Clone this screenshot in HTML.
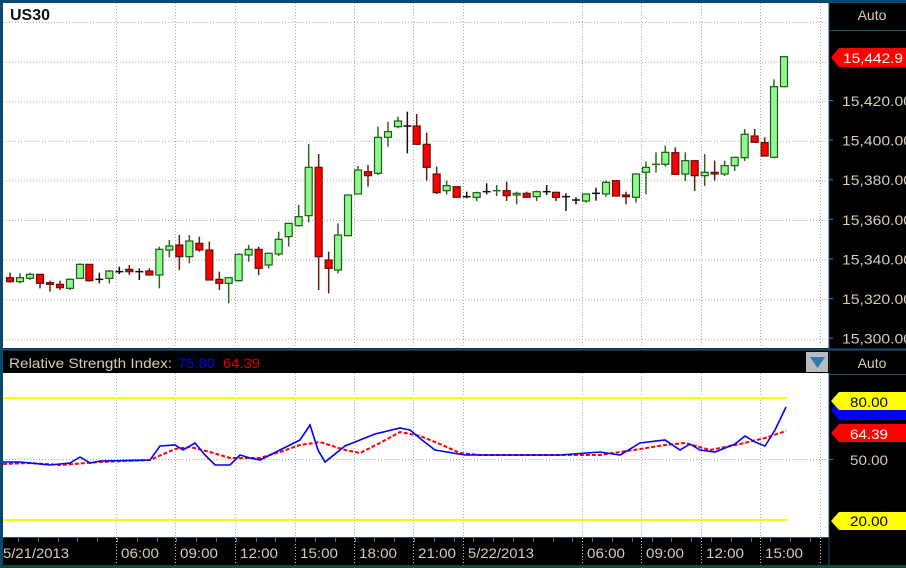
<!DOCTYPE html>
<html><head><meta charset="utf-8"><style>
html,body{margin:0;padding:0;background:#000;}
body{width:906px;height:568px;overflow:hidden;position:relative;font-family:"Liberation Sans",Tahoma,sans-serif;}
svg{position:absolute;left:0;top:0;}
</style></head><body>
<svg id="s" width="906" height="568" xmlns="http://www.w3.org/2000/svg" font-family="Liberation Sans, sans-serif">
<rect x="0" y="0" width="906" height="568" fill="#000"/>
<rect x="0" y="0" width="906" height="3" fill="#0b4a6e"/>
<rect x="0" y="0" width="3" height="568" fill="#0b4a6e"/>
<rect x="0" y="565" width="906" height="3" fill="#0f4a3a"/>
<rect x="3" y="3" width="826" height="345" fill="#fff"/>
<rect x="3" y="373" width="826" height="164" fill="#fff"/>
<line x1="829" y1="3" x2="829" y2="565" stroke="#1b4f70" stroke-width="1"/>
<line x1="3" y1="349.5" x2="906" y2="349.5" stroke="#1b4f70" stroke-width="2"/>
<line x1="3" y1="537.5" x2="829" y2="537.5" stroke="#1b4f70" stroke-width="1"/>
<g id="grid" stroke="#a8a8a8" stroke-width="1" stroke-dasharray="1,2"></g>
<g id="c"></g>
<line x1="3" y1="398" x2="787" y2="398" stroke="#ffff00" stroke-width="2"/>
<line x1="3" y1="520" x2="787" y2="520" stroke="#ffff00" stroke-width="2"/>
<polyline id="red" fill="none" stroke="#ff0000" stroke-width="2" stroke-dasharray="4,2"/>
<polyline id="blue" fill="none" stroke="#0000ff" stroke-width="1.6"/>
<text x="10" y="20" font-size="16" font-weight="bold" fill="#111" textLength="40" lengthAdjust="spacingAndGlyphs">US30</text>
<rect x="3" y="351" width="826" height="22" fill="#000"/>
<text x="9" y="368" font-size="14" fill="#d8ccb8" textLength="163" lengthAdjust="spacingAndGlyphs">Relative Strength Index:</text>
<text x="178" y="368" font-size="14" fill="#0000ff" textLength="37" lengthAdjust="spacingAndGlyphs">75.80</text>
<text x="223" y="368" font-size="14" fill="#e00000" textLength="37" lengthAdjust="spacingAndGlyphs">64.39</text>
<rect x="806" y="352" width="22" height="20" fill="#b8bcc0"/>
<polygon points="810,357 825,357 817.5,368" fill="#2e78b0"/>
<line x1="829" y1="30.5" x2="906" y2="30.5" stroke="#1b4f70"/>
<text x="872" y="20" font-size="14" fill="#d8ccb8" text-anchor="middle">Auto</text>
<text x="872" y="368" font-size="14" fill="#d8ccb8" text-anchor="middle">Auto</text>
<line x1="829" y1="374.5" x2="906" y2="374.5" stroke="#1b4f70"/>
<g id="ax" font-size="14" fill="#d8ccb8"></g>
<polygon points="831,57.5 839,48 906,48 906,67 839,67" fill="#ff0000"/>
<text x="843" y="63" font-size="14" fill="#fff" textLength="60" lengthAdjust="spacingAndGlyphs">15,442.9</text>
<polygon points="831,410 839,401 906,401 906,420 839,420" fill="#0000ff"/>
<polygon points="831,401 839,392 906,392 906,410 839,410" fill="#ffff00"/>
<text x="850" y="407" font-size="14" fill="#000" textLength="38" lengthAdjust="spacingAndGlyphs">80.00</text>
<polygon points="831,433 839,424 906,424 906,442 839,442" fill="#ff0000"/>
<text x="850" y="439" font-size="14" fill="#fff" textLength="38" lengthAdjust="spacingAndGlyphs">64.39</text>
<polygon points="831,521 839,512 906,512 906,530 839,530" fill="#ffff00"/>
<text x="850" y="526" font-size="14" fill="#000" textLength="38" lengthAdjust="spacingAndGlyphs">20.00</text>
<g id="tx" font-size="14" fill="#d8ccb8"></g>
</svg>
<script>
var NS="http://www.w3.org/2000/svg";
function el(p,t,a,txt){var e=document.createElementNS(NS,t);for(var k in a)e.setAttribute(k,a[k]);if(txt)e.textContent=txt;document.getElementById(p).appendChild(e);}
var vx=[116,175,235,295,354,413,463,582,641,701,760,820];
vx.forEach(function(x){el('grid','line',{x1:x+.5,y1:3,x2:x+.5,y2:348});el('grid','line',{x1:x+.5,y1:373,x2:x+.5,y2:537});});
for(var k=0;k<9;k++){var y=22+39.6*k;if(y<348)el('grid','line',{x1:3,y1:y+.5,x2:829,y2:y+.5});}
el('grid','line',{x1:3,y1:459.5,x2:829,y2:459.5});
var labs=["15,420.00","15,400.00","15,380.00","15,360.00","15,340.00","15,320.00","15,300.00"];
labs.forEach(function(l,i){var y=100+39.6*i;el('ax','text',{x:842,y:y+6,textLength:70,lengthAdjust:'spacingAndGlyphs'},l);el('ax','rect',{x:829,y:y,width:4,height:1,fill:'#3a7ab0'});});
el('ax','text',{x:850,y:465,textLength:38,lengthAdjust:'spacingAndGlyphs'},"50.00");el('ax','rect',{x:829,y:459,width:4,height:1,fill:'#3a7ab0'});
var tl=[[3,"5/21/2013",66],[121,"06:00",0],[180,"09:00",0],[240,"12:00",0],[300,"15:00",0],[359,"18:00",0],[418,"21:00",0],[468,"5/22/2013",66],[587,"06:00",0],[646,"09:00",0],[706,"12:00",0],[765,"15:00",0]];
tl.forEach(function(t){el('tx','text',{x:t[0],y:558,textLength:t[2]||38,lengthAdjust:'spacingAndGlyphs'},t[1]);});
vx.forEach(function(x){el('tx','line',{x1:x+.5,y1:538,x2:x+.5,y2:565,stroke:'#ccc','stroke-dasharray':'1,2'});});
for(var x=18;x<829;x+=19.8){el('tx','rect',{x:Math.round(x),y:538,width:1,height:4,fill:'#3a7ab0'});}
var d1=[[30,428,443,455,458,'r'],[60,430,443,455,460,'g'],[90,428,433,445,450,'g'],[120,433,433,460,475,'r'],[150,452,458,463,485,'r'],[180,452,463,473,480,'r'],[210,445,448,475,480,'g'],[240,400,403,445,445,'g'],[268,403,403,452,455,'r'],[298,428,448,448,460,'k'],[328,420,423,445,460,'g'],[358,410,425,425,432,'k'],[388,405,418,425,435,'r'],[418,415,425,425,450,'k'],[448,415,423,435,435,'r'],[478,350,358,435,475,'g'],[508,330,348,360,382,'g'],[538,315,345,380,420,'r'],[568,315,333,380,400,'g'],[598,320,340,360,365,'r'],[628,335,360,450,450,'r'],[658,425,448,460,480,'r'],[686,442,443,460,520,'g'],[716,370,373,452,455,'g'],[746,345,358,375,395,'g'],[776,350,358,415,435,'r'],[806,368,370,405,415,'g'],[836,305,328,372,378,'g'],[866,280,280,320,350,'g'],[896,225,260,287,290,'g'],[926,42,112,257,277,'g'],[956,72,112,380,480,'r'],[986,365,390,415,490,'r'],[1014,280,315,420,430,'g'],[1044,193,195,317,317,'g'],[1074,108,120,192,192,'g'],[1104,105,125,137,170,'r'],[1134,-10,22,130,135,'g'],[1164,-25,5,22,50,'g'],[1194,-40,-27,-10,-5,'g']];
var d2=[[22,215,258,258,340,'k'],[50,222,258,313,313,'r'],[80,278,313,382,422,'r'],[110,380,402,458,462,'r'],[140,422,437,452,463,'g'],[170,440,440,472,472,'r'],[200,455,470,470,475,'k'],[230,455,458,472,483,'g'],[260,430,455,455,463,'k'],[290,435,452,455,468,'g'],[320,425,452,467,483,'r'],[350,455,460,465,493,'g'],[380,455,460,472,472,'r'],[410,452,455,470,483,'g'],[440,435,455,455,465,'k'],[468,455,457,472,483,'r'],[498,460,470,470,513,'k'],[528,472,480,480,493,'k'],[558,460,462,483,488,'g'],[588,443,460,460,482,'k'],[618,422,427,462,470,'g'],[648,422,422,468,470,'r'],[678,455,465,470,493,'r'],[708,400,402,472,488,'g'],[738,365,382,397,463,'g'],[768,337,373,375,398,'g'],[796,317,337,373,380,'g'],[826,322,338,403,403,'r'],[856,337,362,402,423,'g'],[884,360,362,407,453,'r'],[914,342,397,407,438,'g'],[944,362,397,402,422,'r'],[974,362,377,402,408,'g'],[1004,350,352,377,393,'g'],[1034,267,283,353,363,'g'],[1064,267,288,307,307,'r'],[1094,292,308,348,348,'r'],[1122,118,140,352,355,'g'],[1152,50,50,140,140,'g']];
function draw(c,ox,oy){var x=ox+c[0]/3,hi=oy+c[1]/3,t=oy+c[2]/3,b=oy+c[3]/3,lo=oy+c[4]/3;
var wc=c[5]=='g'?'#2a6a1a':c[5]=='r'?'#6a1a10':'#111';
el('c','line',{x1:x,y1:hi,x2:x,y2:lo,stroke:wc,'stroke-width':1.5});
if(c[5]=='k'||b-t<1.5){el('c','line',{x1:x-4,y1:t,x2:x+4,y2:t,stroke:c[5]=='k'?'#111':wc,'stroke-width':1.5});}
else el('c','rect',{x:x-3.5,y:t,width:7,height:b-t,fill:c[5]=='g'?'#90f890':'#ff0000',stroke:c[5]=='g'?'#1f5a14':'#5a1410','stroke-width':1.2});}
d1.forEach(function(c){if(c[0]<1200)draw(c,0,130);});
d2.forEach(function(c){draw(c,400,40);});
var bp=[[3,462],[20,462],[50,465],[70,463],[80,457],[90,463],[100,461],[150,460],[160,446],[175,445],[183,450],[195,443],[205,455],[215,465],[230,465],[240,455],[250,458],[260,460],[280,450],[300,440],[310,425],[318,450],[325,462],[345,446],[360,440],[375,434],[400,428],[410,430],[422,440],[435,450],[465,455],[560,455],[600,452],[620,455],[640,443],[665,440],[680,450],[690,444],[700,450],[715,452],[735,444],[745,436],[755,442],[765,446],[775,430],[786,407]];
var rp=[[3,464],[30,463],[60,465],[100,462],[150,460],[175,449],[190,447],[210,452],[230,458],[260,458],[280,452],[300,445],[320,442],[345,450],[360,453],[380,443],[400,432],[420,436],[440,444],[460,453],[480,455],[600,455],[640,449],[665,445],[685,443],[710,450],[740,444],[765,438],[786,431]];
document.getElementById('blue').setAttribute('points',bp.map(function(p){return p.join(',')}).join(' '));
document.getElementById('red').setAttribute('points',rp.map(function(p){return p.join(',')}).join(' '));
</script>
</body></html>
